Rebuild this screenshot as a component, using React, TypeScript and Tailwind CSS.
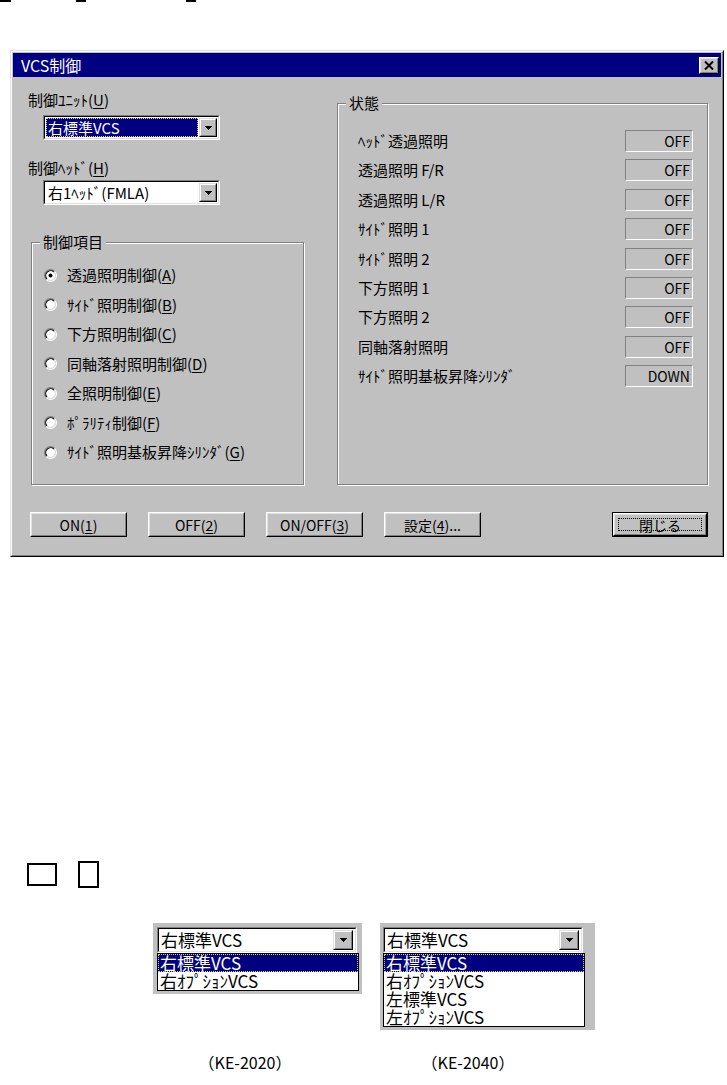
import React from 'react'

const F = "font-['Noto_Sans_CJK_JP','Liberation_Sans',sans-serif]"

function Arrow() {
  return (
    <svg width="7" height="4" viewBox="0 0 7 4" shapeRendering="crispEdges">
      <rect x="0" y="0" width="7" height="1" fill="black" />
      <rect x="1" y="1" width="5" height="1" fill="black" />
      <rect x="2" y="2" width="3" height="1" fill="black" />
      <rect x="3" y="3" width="1" height="1" fill="black" />
    </svg>
  )
}

function DropButton({ big = false }: { big?: boolean }) {
  return (
    <div
      className={`${big ? 'w-[20px] h-[20px]' : 'w-[18px] h-[19px]'} flex-none border border-t-[#dfdfdf] border-l-[#dfdfdf] border-r-black border-b-black`}
    >
      <div className="w-full h-full flex items-center justify-center bg-[#c0c0c0] border border-t-white border-l-white border-r-[#808080] border-b-[#808080]">
        <Arrow />
      </div>
    </div>
  )
}

function Combo({ text, focused = false }: { text: React.ReactNode; focused?: boolean }) {
  return (
    <div className="ml-[15px] w-[177px] h-[25px] border border-t-[#808080] border-l-[#808080] border-b-white border-r-white">
      <div className="h-full flex items-center gap-[1px] p-[1px] bg-white border border-t-black border-l-black border-b-[#dfdfdf] border-r-[#dfdfdf]">
        <div
          className={`flex-1 h-[19px] flex items-center pl-[1px] text-[15px] leading-[17px] ${
            focused ? 'bg-[#000080] text-white border border-dotted border-[#d8d870]' : 'text-black border border-transparent'
          }`}
        >
          {text}
        </div>
        <DropButton />
      </div>
    </div>
  )
}

function GroupBox({ title, className = '', children }: { title: string; className?: string; children?: React.ReactNode }) {
  return (
    <div className={`relative border border-[#808080] shadow-[inset_1px_1px_0_#ffffff,1px_1px_0_#ffffff] ${className}`}>
      <span className="absolute left-[8px] -top-[10px] px-[3px] bg-[#c0c0c0] text-[15px] leading-[18px]">{title}</span>
      {children}
    </div>
  )
}

function Radio({ checked = false }: { checked?: boolean }) {
  return (
    <svg width="13" height="13" viewBox="0 0 12 12" className="flex-none">
      <circle cx="6" cy="6" r="4.5" fill="white" />
      <path d="M2.11 9.89A5.5 5.5 0 0 1 9.89 2.11" stroke="#808080" fill="none" />
      <path d="M9.89 2.11A5.5 5.5 0 0 1 2.11 9.89" stroke="white" fill="none" />
      <path d="M2.82 9.18A4.5 4.5 0 0 1 9.18 2.82" stroke="black" fill="none" />
      <path d="M9.18 2.82A4.5 4.5 0 0 1 2.82 9.18" stroke="#dfdfdf" fill="none" />
      {checked && <circle cx="6" cy="6" r="1.8" fill="black" />}
    </svg>
  )
}

function Btn({ children, def = false, w = 'w-[97px]' }: { children: React.ReactNode; def?: boolean; w?: string }) {
  const face = (
    <div className="h-full border border-t-white border-l-white border-r-black border-b-black">
      <div className="h-full border border-t-[#dfdfdf] border-l-[#dfdfdf] border-r-[#808080] border-b-[#808080] flex items-center justify-center text-[14px] leading-[16px]">
        {def ? (
          <div className="w-[calc(100%-6px)] h-[calc(100%-6px)] border border-dotted border-black flex items-center justify-center">
            {children}
          </div>
        ) : (
          children
        )}
      </div>
    </div>
  )
  return def ? <div className={`${w} h-[25px] ml-auto border border-black`}>{face}</div> : <div className={`${w} h-[25px]`}>{face}</div>
}

const radios: [string, string, string][] = [
  ['透過照明制御(', 'A', ')'],
  ['ｻｲﾄﾞ照明制御(', 'B', ')'],
  ['下方照明制御(', 'C', ')'],
  ['同軸落射照明制御(', 'D', ')'],
  ['全照明制御(', 'E', ')'],
  ['ﾎﾟﾗﾘﾃｨ制御(', 'F', ')'],
  ['ｻｲﾄﾞ照明基板昇降ｼﾘﾝﾀﾞ(', 'G', ')'],
]

const status: [string, string][] = [
  ['ﾍｯﾄﾞ透過照明', 'OFF'],
  ['透過照明 F/R', 'OFF'],
  ['透過照明 L/R', 'OFF'],
  ['ｻｲﾄﾞ照明 1', 'OFF'],
  ['ｻｲﾄﾞ照明 2', 'OFF'],
  ['下方照明 1', 'OFF'],
  ['下方照明 2', 'OFF'],
  ['同軸落射照明', 'OFF'],
  ['ｻｲﾄﾞ照明基板昇降ｼﾘﾝﾀﾞ', 'DOWN'],
]

function Dialog() {
  return (
    <div className="ml-[10px] mt-[48px] w-[714px] h-[507px] border border-t-[#dfdfdf] border-l-[#dfdfdf] border-r-black border-b-black">
      <div className="h-full flex flex-col p-[1px] bg-[#c0c0c0] border border-t-white border-l-white border-r-[#808080] border-b-[#808080]">
        {/* title bar */}
        <div className="h-[24px] flex-none flex items-center bg-[#000080] pl-[8px]">
          <span className="text-white text-[16px] leading-[18px]">VCS制御</span>
          <div className="ml-auto mr-[2px] w-[20px] h-[17px] bg-[#c0c0c0] border border-t-white border-l-white border-r-black border-b-black">
            <div className="h-full flex items-center justify-center border border-t-[#dfdfdf] border-l-[#dfdfdf] border-r-[#808080] border-b-[#808080]">
              <svg width="10" height="9" viewBox="0 0 10 9">
                <path d="M1 0.5L9 8.5M9 0.5L1 8.5" stroke="black" strokeWidth="2" />
              </svg>
            </div>
          </div>
        </div>

        {/* body */}
        <div className="flex-1 flex flex-col pl-[15px] pr-[13px] pt-[14px]">
          <div className="h-[394px] flex gap-[33px]">
            {/* left column */}
            <div className="w-[276px] flex flex-col">
              <div className="h-[18px] text-[15px] leading-[18px]">
                制御ﾕﾆｯﾄ(<u className="underline-offset-2">U</u>)
              </div>
              <div className="mt-[6px]">
                <Combo text="右標準VCS" focused />
              </div>
              <div className="mt-[19px] h-[18px] text-[15px] leading-[18px]">
                制御ﾍｯﾄﾞ(<u className="underline-offset-2">H</u>)
              </div>
              <div className="mt-[3px]">
                <Combo text="右1ﾍｯﾄﾞ(FMLA)" />
              </div>
              <GroupBox title="制御項目" className="mt-[37px] ml-[3px] w-[273px] flex-1">
                <div className="flex flex-col gap-[11.5px] pt-[23px] pl-[12px]">
                  {radios.map(([a, k, b], i) => (
                    <div key={k} className="h-[18px] flex items-center gap-[10px]">
                      <Radio checked={i === 0} />
                      <span className="text-[15px] leading-[18px] whitespace-nowrap">
                        {a}
                        <u className="underline-offset-2">{k}</u>
                        {b}
                      </span>
                    </div>
                  ))}
                </div>
              </GroupBox>
            </div>

            {/* right column */}
            <div className="flex-1 flex flex-col pt-[12px]">
              <GroupBox title="状態" className="flex-1">
                <div className="flex flex-col gap-[7.4px] pt-[26px] pl-[20px] pr-[14px]">
                  {status.map(([label, v]) => (
                    <div key={label} className="h-[22px] flex items-center justify-between">
                      <span className="text-[15px] leading-[18px] whitespace-nowrap">{label}</span>
                      <div className="w-[68px] h-[22px] flex items-center justify-end pr-[2px] text-[14px] leading-[16px] border border-t-[#808080] border-l-[#808080] border-b-white border-r-white">
                        {v}
                      </div>
                    </div>
                  ))}
                </div>
              </GroupBox>
            </div>
          </div>

          {/* buttons */}
          <div className="mt-[27px] pl-[2px] flex gap-[21px]">
            <Btn>
              ON(<u className="underline-offset-2">1</u>)
            </Btn>
            <Btn>
              OFF(<u className="underline-offset-2">2</u>)
            </Btn>
            <Btn>
              ON/OFF(<u className="underline-offset-2">3</u>)
            </Btn>
            <Btn>
              設定(<u className="underline-offset-2">4</u>)...
            </Btn>
            <Btn def w="w-[96px]">
              閉じる
            </Btn>
          </div>
        </div>
      </div>
    </div>
  )
}

function DemoCombo({ items, className = '' }: { items: string[]; className?: string }) {
  return (
    <div className={`bg-[#c0c0c0] pt-[4px] pb-[3px] ${className}`}>
      <div className="w-[200px] h-[26px] border border-t-[#808080] border-l-[#808080] border-b-white border-r-white">
        <div className="h-full flex items-center pl-[2px] pr-[2px] bg-white border border-t-black border-l-black border-b-[#dfdfdf] border-r-[#dfdfdf]">
          <span className="flex-1 text-[17px] leading-[20px]">右標準VCS</span>
          <DropButton big />
        </div>
      </div>
      <div className="w-[202px] border border-black bg-white">
        {items.map((t, i) => (
          <div
            key={t}
            className={`h-[18px] pl-[2px] text-[17px] leading-[18px] ${
              i === 0 ? 'bg-[#000080] text-white outline outline-1 outline-dotted outline-[#d8d870] -outline-offset-1' : ''
            }`}
          >
            {t}
          </div>
        ))}
      </div>
    </div>
  )
}

export default function App() {
  return (
    <div className={`w-[727px] h-[1085px] bg-white text-black overflow-hidden ${F}`}>
      <div className="flex h-[2px]">
        <div className="w-[11px] bg-black" />
        <div className="w-[10px] ml-[65px] bg-black" />
        <div className="w-[10px] ml-[100px] bg-black" />
      </div>

      <Dialog />

      <div className="mt-[304px] ml-[27px] h-[27px] flex items-center">
        <div className="w-[30px] h-[23px] border-2 border-black" />
        <div className="ml-[21px] w-[21px] h-[27px] border-2 border-black" />
      </div>

      <div className="mt-[35px] flex items-start">
        <DemoCombo className="ml-[153px] w-[209px] pl-[4px]" items={['右標準VCS', '右ｵﾌﾟｼｮﾝVCS']} />
        <DemoCombo
          className="ml-[18px] w-[215px] pl-[3px]"
          items={['右標準VCS', '右ｵﾌﾟｼｮﾝVCS', '左標準VCS', '左ｵﾌﾟｼｮﾝVCS']}
        />
      </div>

      <div className="mt-[23px] flex text-[16px] leading-[18px]">
        <div className="ml-[152px] w-[186px] text-center">（KE-2020）</div>
        <div className="ml-[42px] w-[176px] text-center">（KE-2040）</div>
      </div>
    </div>
  )
}
